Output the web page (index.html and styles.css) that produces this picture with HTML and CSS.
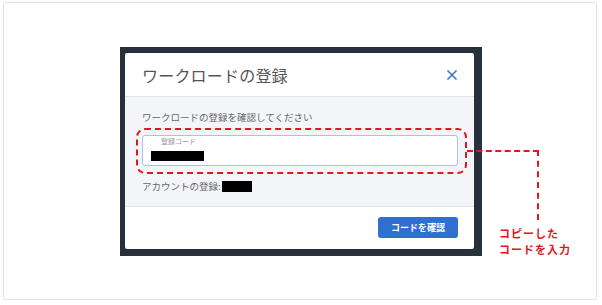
FILE: index.html
```html
<!DOCTYPE html>
<html lang="ja">
<head>
<meta charset="utf-8">
<link rel="stylesheet" href="styles.css">
</head>
<body>
<div class="page">
  <div class="frame">
    <div class="dialog">
      <div class="header">
        <div class="title">ワークロードの登録</div>
        <svg class="close" width="12" height="12" viewBox="0 0 12 12"><path d="M1.5 1.5 L10.5 10.5 M10.5 1.5 L1.5 10.5" stroke="#3a78d0" stroke-width="1.6" fill="none"/></svg>
      </div>
      <div class="body">
        <div class="subtitle">ワークロードの登録を確認してください</div>
        <div class="field-wrap">
          <div class="field">
            <div class="label">登録コード</div>
            <div class="redact code"></div>
          </div>
          <div class="highlight"></div>
        </div>
        <div class="account">アカウントの登録:<span class="redact acct"></span></div>
      </div>
      <div class="footer">
        <button class="btn">コードを確認</button>
      </div>
    </div>
  </div>
  <div class="connector"></div>
  <div class="note">コピーした<br>コードを入力</div>
</div>
</body>
</html>
```
FILE: styles.css
```css
html, body { margin: 0; padding: 0; background: #fff; }
body { font-family: "Noto Sans CJK JP", "Noto Sans", sans-serif; }
.page {
  position: relative;
  margin: 2px 0 0 3px;
  width: 594px;
  height: 298px;
  border: 1px solid #e2e2e2;
  border-radius: 3px;
  box-sizing: border-box;
  padding: 44px 0 0 116px;
}
.frame {
  width: 362px;
  height: 209px;
  box-sizing: border-box;
  background: #28303c;
  padding: 6px 8px 7px 5px;
}
.dialog {
  background: #fff;
  border-radius: 2px;
  height: 196px;
  display: flex;
  flex-direction: column;
}
.header {
  height: 44px;
  box-sizing: border-box;
  border-bottom: 1px solid #dde3ea;
  display: flex;
  align-items: center;
  justify-content: space-between;
  padding: 0 16px 0 17px;
}
.title { font-size: 16px; color: #555; letter-spacing: 0.2px; }
.close { display: block; }
.body {
  background: #f3f5f9;
  height: 110px;
  box-sizing: border-box;
  border-bottom: 1px solid #dfe5ec;
  padding: 13px 16px 0 17px;
}
.subtitle { font-size: 9.5px; line-height: 14px; color: #666; }
.field-wrap { position: relative; margin-top: 11px; }
.field {
  height: 31px;
  box-sizing: border-box;
  background: #fff;
  border: 1px solid #a8c3e6;
  border-radius: 3px;
  padding: 1px 0 0 8px;
}
.label { font-size: 7px; line-height: 9px; color: #999; padding-left: 10px; }
.redact { display: inline-block; background: #000; }
.code { display: block; width: 53px; height: 10px; margin-top: 5px; }
.highlight {
  position: absolute;
  left: -6px; top: -7px; right: -9px; bottom: -8px;
  border: 2px dashed #e3161f;
  border-radius: 9px;
}
.account { margin-top: 14px; font-size: 9.5px; line-height: 12px; color: #666; display: flex; align-items: center; }
.acct { width: 30px; height: 11px; margin-left: 1px; }
.footer {
  flex: 1;
  display: flex;
  justify-content: flex-end;
  align-items: flex-start;
  padding: 10px 16px 0 0;
}
.btn {
  width: 80px;
  height: 21px;
  border: none;
  border-radius: 3px;
  background: #2f6fce;
  color: #fff;
  font-family: inherit;
  font-size: 9px;
  font-weight: bold;
  padding: 0;
}
.connector {
  position: absolute;
  left: 463px;
  top: 147px;
  width: 70px;
  height: 68px;
  border-top: 2px dashed #e3161f;
  border-right: 2px dashed #e3161f;
}
.note {
  position: absolute;
  left: 495px;
  top: 222px;
  font-size: 11px;
  line-height: 16px;
  font-weight: bold;
  color: #e3161f;
  letter-spacing: 1px;
}
```
